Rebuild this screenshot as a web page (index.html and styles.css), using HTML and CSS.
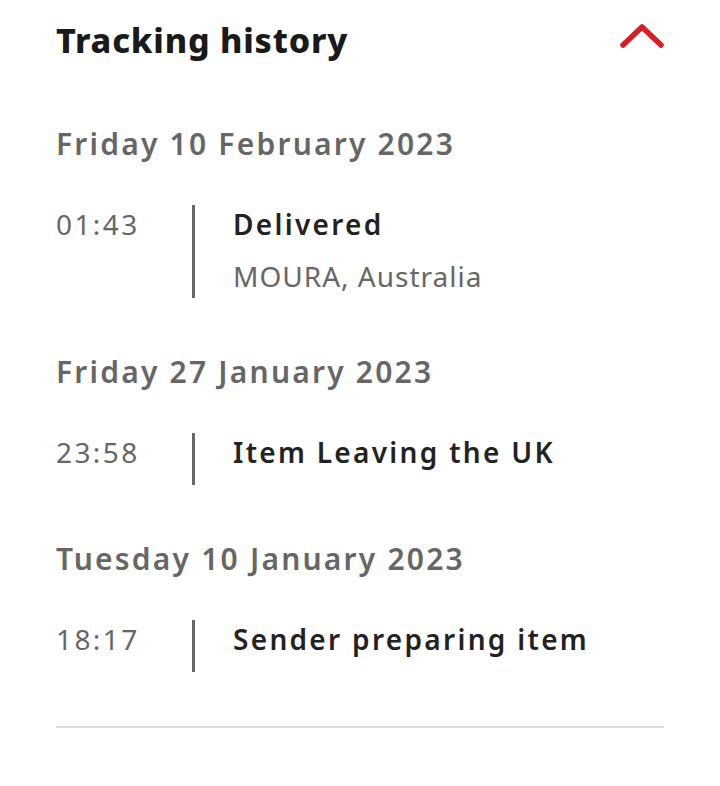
FILE: index.html
```html
<!DOCTYPE html>
<html lang="en">
<head>
    <meta charset="UTF-8">
    <meta name="viewport" content="width=device-width, initial-scale=1.0">
    <title>Tracking history</title>
    <link rel="stylesheet" href="styles.css">
</head>
<body>
    <section class="panel">
        <div class="panel-header">
            <h2 class="panel-title">Tracking history</h2>
            <button class="toggle" aria-label="Collapse">
                <svg width="46" height="26" viewBox="0 0 46 26">
                    <polyline points="4,22 23,4 42,22" fill="none" stroke="#da1e28" stroke-width="5.5" stroke-linecap="round" stroke-linejoin="round"/>
                </svg>
            </button>
        </div>

        <h3 class="day">Friday 10 February 2023</h3>
        <div class="event">
            <div class="time">01:43</div>
            <div class="event-body">
                <div class="event-title">Delivered</div>
                <div class="event-place">MOURA, Australia</div>
            </div>
        </div>

        <h3 class="day">Friday 27 January 2023</h3>
        <div class="event">
            <div class="time">23:58</div>
            <div class="event-body">
                <div class="event-title">Item Leaving the UK</div>
            </div>
        </div>

        <h3 class="day">Tuesday 10 January 2023</h3>
        <div class="event">
            <div class="time">18:17</div>
            <div class="event-body">
                <div class="event-title">Sender preparing item</div>
            </div>
        </div>

        <hr class="divider">
    </section>
</body>
</html>
```

FILE: styles.css
```css
body {
    margin: 0;
    background: #fff;
    font-family: "Noto Sans", sans-serif;
}
.panel {
    padding: 18px 56px 40px;
}
.panel-header {
    display: flex;
    justify-content: space-between;
    align-items: flex-start;
    margin-bottom: 62px;
}
.panel-title {
    margin: 0;
    font-size: 34px;
    line-height: 44px;
    font-weight: 800;
    letter-spacing: 0.8px;
    color: #1a1a1a;
}
.toggle {
    background: none;
    border: none;
    padding: 0;
    margin: 5px -1px 0 0;
    cursor: pointer;
    display: flex;
}
.day {
    margin: 0 0 41px;
    font-size: 30px;
    line-height: 40px;
    font-weight: 600;
    letter-spacing: 2.2px;
    color: #666;
}
.event {
    display: flex;
    min-height: 52px;
    margin-bottom: 54px;
}
.time {
    width: 136px;
    font-size: 28px;
    line-height: 38px;
    letter-spacing: 2.4px;
    color: #666;
}
.event-body {
    border-left: 3px solid #666;
    padding: 0 0 3px 38px;
}
.event-title {
    font-size: 28px;
    line-height: 38px;
    font-weight: 600;
    letter-spacing: 2.3px;
    color: #222;
}
.event-place {
    margin-top: 14px;
    font-size: 28px;
    line-height: 38px;
    letter-spacing: 1px;
    color: #666;
}
.divider {
    margin: 0;
    border: none;
    border-top: 2px solid #ddd;
}
```
